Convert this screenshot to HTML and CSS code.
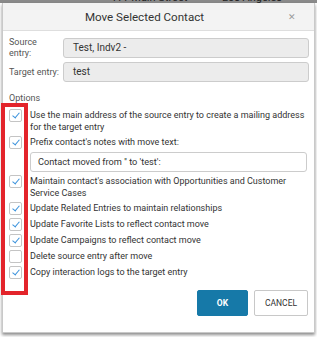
FILE: index.html
```html
<!DOCTYPE html>
<html lang="en">
<head>
    <meta charset="UTF-8">
    <title>Move Selected Contact</title>
    <link rel="stylesheet" href="styles.css">
</head>
<body>
    <div class="backdrop">
        <span class="backdrop-street">411 Main Street</span>
        <span class="backdrop-city">Los Angeles</span>
    </div>
    <div class="dialog">
        <div class="dialog-header">
            <div class="dialog-title">Move Selected Contact</div>
            <span class="dialog-close">&#x2715;</span>
        </div>
        <div class="dialog-body">
            <div class="field-row">
                <span class="field-label">Source entry:</span>
                <div class="field-input readonly">Test, Indv2 -</div>
            </div>
            <div class="field-row">
                <span class="field-label single">Target entry:</span>
                <div class="field-input readonly">test</div>
            </div>
            <div class="options-title">Options</div>
            <div class="options">
                <label class="option">
                    <span class="check checked"></span>
                    <span class="option-text">Use the main address of the source entry to create a mailing address for the target entry</span>
                </label>
                <label class="option">
                    <span class="check checked"></span>
                    <span class="option-text">Prefix contact's notes with move text:</span>
                </label>
                <div class="move-text">Contact moved from '' to 'test':</div>
                <label class="option">
                    <span class="check checked"></span>
                    <span class="option-text">Maintain contact's association with Opportunities and Customer Service Cases</span>
                </label>
                <label class="option">
                    <span class="check checked"></span>
                    <span class="option-text">Update Related Entries to maintain relationships</span>
                </label>
                <label class="option">
                    <span class="check checked"></span>
                    <span class="option-text">Update Favorite Lists to reflect contact move</span>
                </label>
                <label class="option">
                    <span class="check checked"></span>
                    <span class="option-text">Update Campaigns to reflect contact move</span>
                </label>
                <label class="option">
                    <span class="check"></span>
                    <span class="option-text">Delete source entry after move</span>
                </label>
                <label class="option">
                    <span class="check checked"></span>
                    <span class="option-text">Copy interaction logs to the target entry</span>
                </label>
            </div>
            <div class="dialog-footer">
                <button class="btn btn-primary">OK</button>
                <button class="btn btn-default">CANCEL</button>
            </div>
        </div>
        <div class="highlight"></div>
    </div>
</body>
</html>
```

FILE: styles.css
```css
body {
    margin: 0;
    font-family: Roboto, "Liberation Sans", sans-serif;
    font-size: 9px;
    color: #333;
    background-color: #fff;
    position: relative;
    height: 337px;
    overflow: hidden;
}
.backdrop {
    height: 3px;
    background-color: #8a8a8a;
    overflow: hidden;
    position: relative;
    font-size: 11px;
    line-height: 11px;
    color: #222;
}
.backdrop-street {
    position: absolute;
    left: 110px;
    top: -8px;
}
.backdrop-city {
    position: absolute;
    left: 222px;
    top: -8px;
}
.dialog {
    position: relative;
    margin-left: 2px;
    width: 311px;
    height: 329px;
    border: 1px solid #c9c9c9;
    border-top: none;
    background-color: #fff;
    box-shadow: 0 2px 3px rgba(0,0,0,0.45);
}
.dialog-header {
    display: flex;
    align-items: center;
    height: 27px;
    background-color: #f3f3f3;
    border-bottom: 1px solid #dedede;
}
.dialog-title {
    flex: 1;
    text-align: center;
    font-size: 11.6px;
    color: #333;
    padding-left: 14px;
}
.dialog-close {
    width: 40px;
    text-align: center;
    font-size: 9px;
    color: #9a9a9a;
    padding-right: 2px;
}
.dialog-body {
    padding: 6px 5px 0 6px;
}
.field-row {
    display: grid;
    grid-template-columns: 54px 1fr;
    align-items: center;
    margin-bottom: 3px;
}
.field-label {
    color: #555;
    line-height: 11px;
    padding-right: 12px;
}
.field-label.single {
    white-space: nowrap;
}
.field-input {
    height: 18px;
    line-height: 18px;
    border: 1px solid #ccc;
    border-radius: 3px;
    padding: 0 9px;
    font-size: 10px;
}
.readonly {
    background-color: #ececec;
}
.options-title {
    margin-top: 10px;
    color: #555;
    line-height: 12px;
}
.options {
    display: flex;
    flex-direction: column;
    gap: 3px;
    margin-top: 5px;
}
.option {
    display: flex;
    gap: 8px;
    align-items: flex-start;
    line-height: 12px;
}
.check {
    flex: none;
    width: 11px;
    height: 11px;
    border: 1px solid #c4c4c4;
    border-radius: 2px;
    background-color: #fff;
    position: relative;
}
.check.checked::after {
    content: "";
    position: absolute;
    left: 3.5px;
    top: 1px;
    width: 3px;
    height: 6px;
    border-right: 1.3px solid #3a92dc;
    border-bottom: 1.3px solid #3a92dc;
    transform: rotate(40deg);
}
.option-text {
    color: #333;
}
.move-text {
    margin: 0 2px 0 21px;
    height: 18px;
    line-height: 18px;
    border: 1px solid #ccc;
    border-radius: 3px;
    padding: 0 7px;
    font-size: 9.2px;
}
.dialog-footer {
    display: flex;
    justify-content: flex-end;
    gap: 6px;
    margin-top: 11px;
    padding-right: 1px;
}
.btn {
    height: 26px;
    font-family: Roboto, "Liberation Sans", sans-serif;
    font-size: 8.5px;
    border-radius: 2px;
    cursor: pointer;
}
.btn-primary {
    width: 51px;
    background-color: #1679a8;
    border: 1px solid #1679a8;
    color: #fff;
    font-weight: bold;
}
.btn-default {
    width: 54px;
    background-color: #fff;
    border: 1px solid #c8c8c8;
    color: #333;
}
.highlight {
    position: absolute;
    left: -2px;
    top: 100px;
    width: 19px;
    height: 184px;
    border: 4px solid #e3242b;
}
```
